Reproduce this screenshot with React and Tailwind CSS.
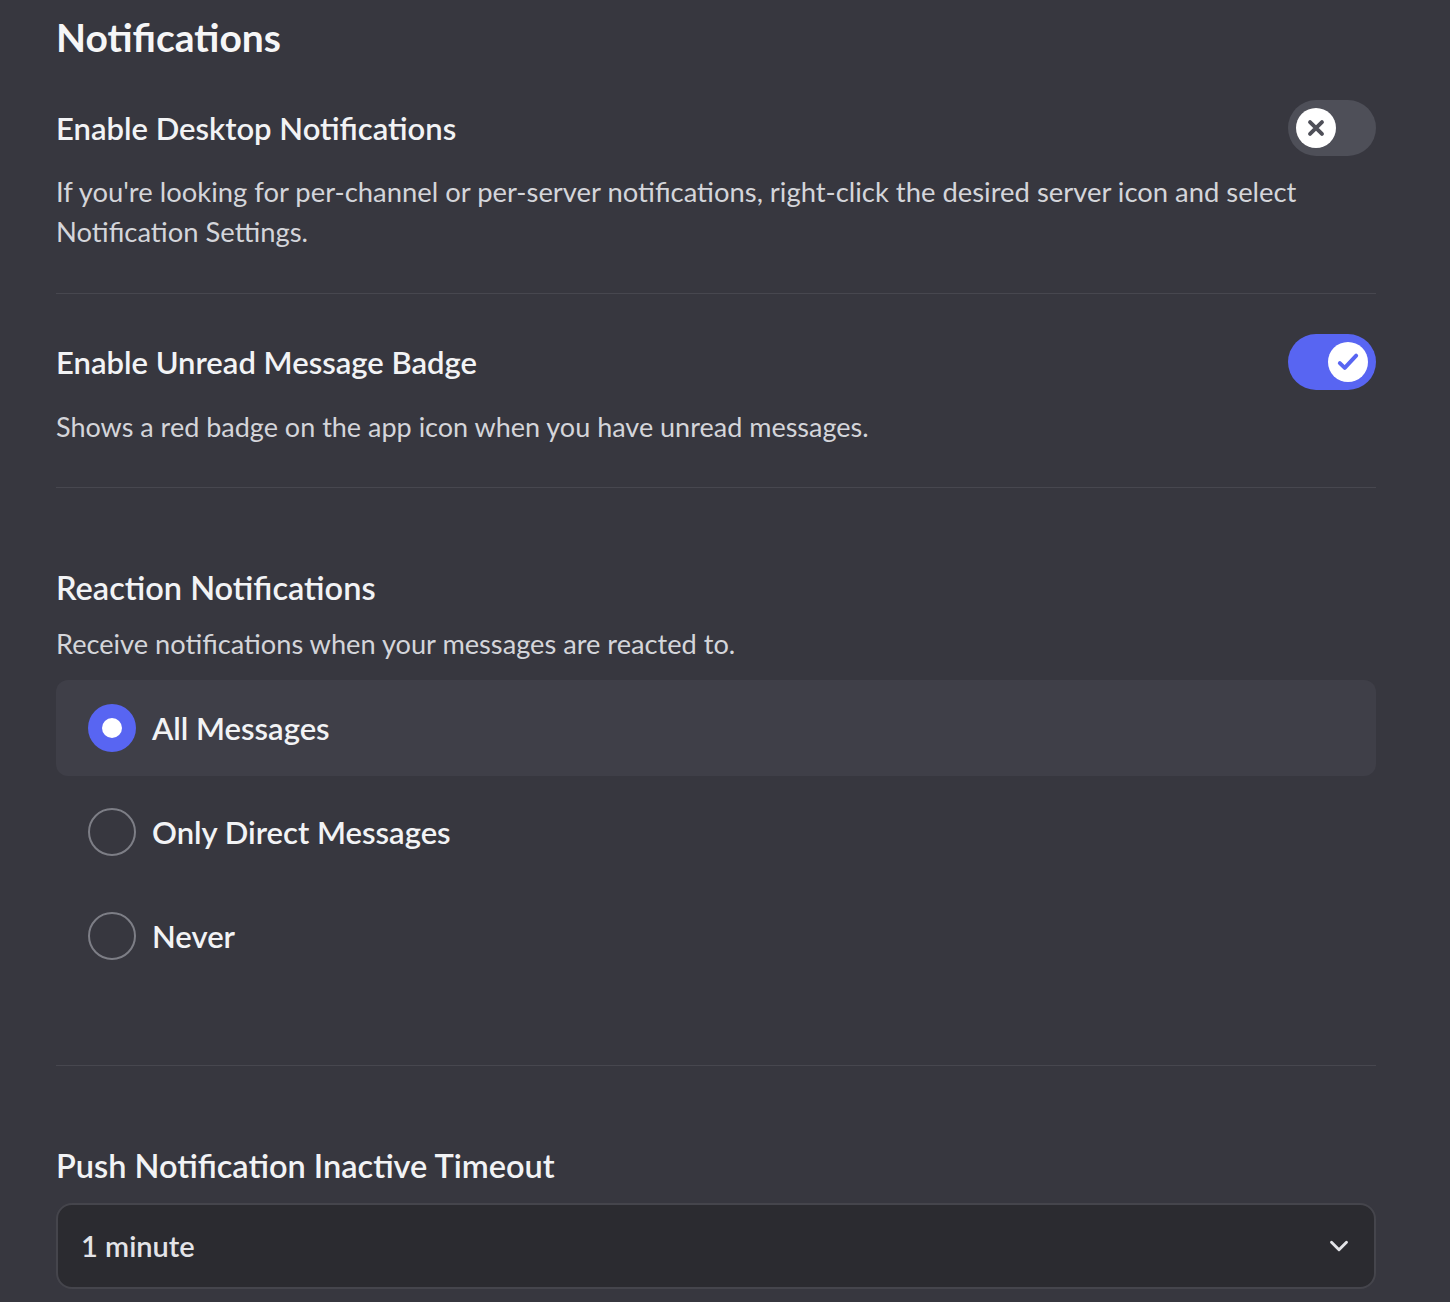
import React, { useState } from "react";
import { ChevronDown } from "lucide-react";

const font = { fontFamily: "Lato, 'Noto Sans', sans-serif" };

function Toggle({ on, onClick }) {
  return (
    <button
      onClick={onClick}
      className={`relative w-[88px] h-[56px] rounded-full shrink-0 flex items-center px-[8px] ${on ? "bg-[#5865f2] justify-end" : "bg-[#4e4f58] justify-start"}`}
    >
      <span className="w-[40px] h-[40px] rounded-full bg-white flex items-center justify-center">
        {on ? (
          <svg width="28" height="28" viewBox="0 0 24 24" fill="none">
            <path d="M5 13l4.2 4L19 6.5" stroke="#5865f2" strokeWidth="3.4" strokeLinecap="round" strokeLinejoin="round" />
          </svg>
        ) : (
          <svg width="26" height="26" viewBox="0 0 24 24" fill="none">
            <path d="M6.5 6.5l11 11M17.5 6.5l-11 11" stroke="#4e4f58" strokeWidth="3.6" strokeLinecap="round" />
          </svg>
        )}
      </span>
    </button>
  );
}

function Radio({ label, selected, onClick }) {
  return (
    <div
      onClick={onClick}
      className={`h-[96px] rounded-[12px] flex items-center px-[32px] gap-[16px] cursor-pointer ${selected ? "bg-[#3f3f48]" : ""}`}
    >
      {selected ? (
        <span className="w-[48px] h-[48px] rounded-full bg-[#5865f2] flex items-center justify-center">
          <span className="w-[20px] h-[20px] rounded-full bg-white" />
        </span>
      ) : (
        <span className="w-[48px] h-[48px] rounded-full border-2 border-[#7d7e86]" />
      )}
      <span className="text-[31px] leading-[40px] font-semibold text-[#f2f3f5]">{label}</span>
    </div>
  );
}

export default function App() {
  const [desktop, setDesktop] = useState(false);
  const [badge, setBadge] = useState(true);
  const [reaction, setReaction] = useState("all");

  return (
    <div style={font} className="min-h-[1302px] w-full bg-[#37373f] pl-[56px] overflow-hidden">
      <div className="w-[1320px]">
        <h1 className="pt-[13px] text-[39px] leading-[48px] font-bold text-[#f6f6f7]">Notifications</h1>

        <div className="mt-[39px] h-[56px] flex items-center justify-between">
          <h2 className="text-[31px] leading-[40px] font-semibold text-[#f2f3f5]">Enable Desktop Notifications</h2>
          <Toggle on={desktop} onClick={() => setDesktop(!desktop)} />
        </div>
        <p className="mt-[16px] text-[27.4px] leading-[40px] text-[#d4d5da]">
          If you're looking for per-channel or per-server notifications, right-click the desired server icon and select Notification Settings.
        </p>

        <div className="mt-[41px] h-px bg-[#47474f]" />

        <div className="mt-[40px] h-[56px] flex items-center justify-between">
          <h2 className="text-[31px] leading-[40px] font-semibold text-[#f2f3f5]">Enable Unread Message Badge</h2>
          <Toggle on={badge} onClick={() => setBadge(!badge)} />
        </div>
        <p className="mt-[17px] text-[27px] leading-[40px] text-[#d4d5da]">
          Shows a red badge on the app icon when you have unread messages.
        </p>

        <div className="mt-[40px] h-px bg-[#47474f]" />

        <h2 className="mt-[80px] text-[32.5px] leading-[40px] font-semibold text-[#f2f3f5]">Reaction Notifications</h2>
        <p className="mt-[16px] text-[27.2px] leading-[40px] text-[#d4d5da]">
          Receive notifications when your messages are reacted to.
        </p>
        <div className="mt-[16px] flex flex-col gap-[8px]">
          <Radio label="All Messages" selected={reaction === "all"} onClick={() => setReaction("all")} />
          <Radio label="Only Direct Messages" selected={reaction === "dm"} onClick={() => setReaction("dm")} />
          <Radio label="Never" selected={reaction === "never"} onClick={() => setReaction("never")} />
        </div>

        <div className="mt-[81px] h-px bg-[#47474f]" />

        <h2 className="mt-[80px] text-[32.5px] leading-[40px] font-semibold text-[#f2f3f5]">Push Notification Inactive Timeout</h2>
        <div className="mt-[17px] h-[86px] rounded-[16px] border-2 border-[#45454c] bg-[#2b2b30] flex items-center justify-between pl-[23px] pr-[20px]">
          <span className="text-[29px] leading-[40px] font-semibold text-[#e3e4e8]">1 minute</span>
          <ChevronDown size={30} strokeWidth={2.3} className="text-[#e3e4e8]" />
        </div>
      </div>
    </div>
  );
}
